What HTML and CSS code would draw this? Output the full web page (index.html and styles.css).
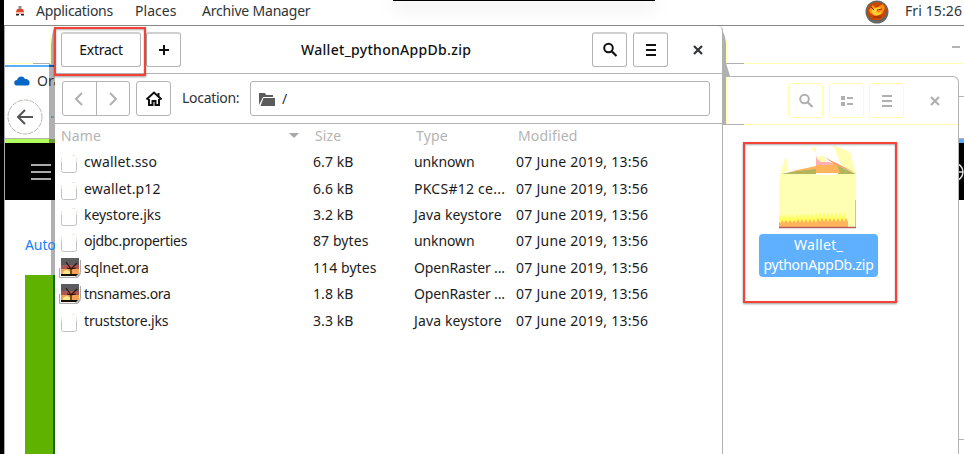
FILE: index.html
```
<!DOCTYPE html>
<html lang="en">
<head>
<meta charset="utf-8">
<title>Archive Manager</title>
<link rel="stylesheet" href="styles.css">
</head>
<body>
<svg class="defs" width="0" height="0">
  <symbol id="doc" viewBox="0 0 20 22"><path d="M2.500 8v9.500q0 2 2 2h11q2 0 2-2V8" fill="none" stroke="#c2c2c2"/><path d="M2.500 9V5M17.500 9V5M13 2.500h3" stroke="#dfeedd" fill="none"/></symbol>
  <symbol id="pic" viewBox="0 0 22 22"><path d="M.5 11v9.500h18q3-2 3-5V3" fill="#f4f4f4" stroke="#aaa"/><path d="M2 1h18v18H2z" fill="#5c5c5e"/><path d="M2 8h18v4H2z" fill="#ad5555"/><path d="M2 12h18v5H2z" fill="#f2a253"/><path d="M4 15q4-4 7 0v2H4z" fill="#ffe68b"/><path d="M2 17h18v2H2z" fill="#151006"/><path d="M12 17v-5L7 5m5 7 6-6m-6 6-4-1m4 1 5-1" fill="none" stroke="#30170c" stroke-width="1.200"/><path d="m16 20 5-5v3l-3 2z" fill="#bbb"/></symbol>
  <symbol id="search" viewBox="0 0 16 16"><circle cx="6.500" cy="6" r="4.300" fill="none" stroke="currentColor" stroke-width="2"/><path d="m9.700 9.200 4.800 4.800" stroke="currentColor" stroke-width="2.200"/></symbol>
  <symbol id="menu" viewBox="0 0 16 16"><path d="M3 3h10M3 8h10M3 13h10" stroke="currentColor" stroke-width="2"/></symbol>
  <symbol id="close" viewBox="0 0 16 16"><path d="m4 4 8 8m0-8-8 8" stroke="currentColor" stroke-width="2.200"/></symbol>
</svg>

<div class="desktop">
  <header class="topbar">
    <svg class="hat" width="10" height="12" viewBox="0 0 10 12"><path d="M3.500 1h3v3h-3z" fill="#8b8d8d"/><path d="M2 4h6l1 3H1z" fill="#e8432b"/><path d="M1 7h8v2H1z" fill="#f2b9a8"/><path d="M1 9h3v1.500H1zM6 9h3v1.500H6z" fill="#222"/></svg>
    <span class="m-apps">Applications</span><span class="m-places">Places</span><span class="m-arch">Archive Manager</span>
    <svg class="badge" width="24" height="24" viewBox="0 0 24 24"><circle cx="12" cy="12" r="11.500" fill="#666"/><path d="M2 10 5 4l6-2 8 2 3 6-2 6-5 4H7l-4-4z" fill="#c94800"/><path d="m4 10 4-5 3 3 7-4 2 4-3 6-7 2-5-3z" fill="#ff8b10"/><path d="M6 11q4-5 11-3-6 2-6 4 4 2 6-2-1 7-8 5z" fill="#ffd238"/><path d="m6 7 3 3m3 0 5-1M8 17h8" stroke="#8f2b00"/></svg>
    <span class="clock">Fri 15:26</span>
  </header>
  <div class="overlay-edge"></div>

  <section class="browser">
    <div class="b-title"><i class="b-line"></i><i class="b-min"></i></div>
    <div class="b-tab"><svg width="16" height="10" viewBox="0 0 16 10"><path d="M2 9.500C-1 8 0 4 3 4 4 0 9-1 11 3c3-.5 5 2 4.500 4.500-.5 2-1.500 2-3 2z" fill="#0766c6"/></svg><span>Ora</span></div>
    <div class="b-nav"><svg width="36" height="36" viewBox="0 0 36 36"><circle cx="18" cy="18" r="17" fill="#fff" stroke="#b9b9b2" stroke-dasharray="5 1"/><path d="M26 18H11m7-7-7 7 7 7" fill="none" stroke="#555" stroke-width="2"/></svg></div>
    <div class="b-accent"><i></i></div>
    <div class="b-band"><svg class="b-menu" width="20" height="16" viewBox="0 0 20 16"><path d="M0 1h20M0 8h20M0 15h20" stroke="#aaa" stroke-width="2"/></svg><svg class="globe" width="20" height="20" viewBox="0 0 20 20"><path d="M10 1a9 9 0 1 1 0 18a9 9 0 1 1 0-18M1 10h18M10 1v18" fill="none" stroke="#ddd" stroke-width="1.500"/></svg></div>
    <div class="b-page"><span>Auto</span><div class="b-green"></div><i class="b-rule"></i></div>
  </section>

  <svg class="shade" width="6" height="428" viewBox="0 0 6 428"><path d="M6 0Q3 5 2 20v18H0v75h6z" fill="#b0b0b0"/><path d="M0 39h6v2H0z" fill="#0a5aaa"/><path d="M0 113h6v4H0z" fill="#6f9a38"/><path d="M0 117h6v57H0z"/><path d="M2 174h4v75H2z" fill="#b0b0b0"/><path d="M4 249h2v179H4z" fill="#176607"/><path d="M1.500 10v28" stroke="#ffffb4"/><path d="M2 91h3" stroke="#308090"/></svg>
  <svg class="shade-r" width="10" height="100" viewBox="0 0 10 100"><path d="M1 6q3 5 3 14v17l4 13H4v48H0V0z" fill="#b0b0b0"/><path d="M4.500 15v22M4.500 51v47" stroke="#ffffb4"/></svg>

  <section class="files">
    <div class="f-head">
      <button><svg><use href="#search"/></svg></button>
      <button><svg viewBox="0 0 16 16"><path d="M2 3h4v4H2zM2 9h4v4H2z" fill="currentColor"/><path d="M8 5h6M8 11h6" stroke="currentColor" stroke-width="2"/></svg></button>
      <button><svg><use href="#menu"/></svg></button>
      <svg class="f-close"><use href="#close"/></svg>
    </div>
    <div class="f-item">
      <svg class="package" width="80" height="84" viewBox="0 0 80 84">
        <path d="M2 28 8 10l1 10 2 5-8 4zM33 3l5-1v6zM38 13l7-3 5 10H38zM55 0l17 7 6 22-15-9z" fill="#ffffb4"/>
        <path d="M3 29 38 22v7z" fill="#b4b45c"/><path d="M59 20 78 29H60z" fill="#b4b45c"/><path d="m10 27 28-6v-3h20l4 10H38V24z" fill="#ffb45c"/><path d="M38 10v10h18l-4-3h-9l-4-3z" fill="#ffb0b0"/><path d="m46 12 32 16-20-8z" fill="#ff955c"/>
        <path d="M2 29h76v53H1V43z" fill="#ffffb4"/><path d="M39 29h19v1H39z" fill="#fff"/>
        <path d="M1 82V72l1-3 1 5 1-5 1 5 1-5 2 5 1-5 1 5 2-5 2 5 1-5 2 5 2-6 2 6 1-6 2 6 2-6 2 6 2-6 2 6 2-6 2 6 2-7 2 7 2-7 2 7 2-7 2 7 2-7 2 7 2-7 2 7 2-7 2 7 2-7 2 7 2-7 2 7V82z" fill="#ffff5a"/>
        <path d="M1 82v-5l2 1 1-3 2 3 2-3 2 3 2-3 2 3 2-3 2 3 2-4 2 4 2-4 2 4 2-4 2 4 2-4 2 4 2-4 2 4 2-5 2 4 2-4 2 4 2-4 2 4 2-4 2 4 2-4 2 4 2-4 2 4 2-4 2 4 2-4 2 4V82z" fill="#ffb45c"/>
        <path d="M77.500 55v27" stroke="#ffae7c"/><path d="M1 82.500h77" stroke="#b45c5c" stroke-width="1.500"/>
      </svg>
      <div class="f-label"><span>Wallet_</span><span class="second">pythonAppDb.zip</span></div>
    </div>
  </section>
  <div class="callout item-callout"></div>

  <main class="archive">
    <div class="a-head">
      <button class="extract">Extract</button>
      <button class="plus"><svg viewBox="0 0 16 16"><path d="M8 3v10M3 8h10" stroke="currentColor" stroke-width="2"/></svg></button>
      <strong>Wallet_pythonAppDb.zip</strong>
      <button class="find"><svg><use href="#search"/></svg></button>
      <button class="burger"><svg><use href="#menu"/></svg></button>
      <svg class="a-close"><use href="#close"/></svg>
    </div>
    <div class="a-tools">
      <div class="pair"><span><svg viewBox="0 0 16 16"><path d="m11 2-6 6 6 6" fill="none" stroke="currentColor" stroke-width="2"/></svg></span><span><svg viewBox="0 0 16 16"><path d="m5 2 6 6-6 6" fill="none" stroke="currentColor" stroke-width="2"/></svg></span></div>
      <button class="home"><svg viewBox="0 0 16 16"><path d="m.5 8.500 7.500-7 7.500 7" fill="none" stroke="currentColor" stroke-width="2"/><path d="M3 8v6h3.500v-4h3v4H13V8M12.500 2v4" fill="none" stroke="currentColor" stroke-width="2"/></svg></button>
      <label>Location:</label>
      <div class="entry"><svg width="17" height="14" viewBox="0 0 17 14"><path d="M0 13V1h6l1 2h7v2H4z" fill="#5b5b5b"/><path d="M4.500 6H16v8H1.500z" fill="#5b5b5b"/></svg><span>/</span></div>
    </div>
    <div class="grid cols"><span>Name</span><i class="sort"></i><span>Size</span><span>Type</span><span>Modified</span></div>
    <div class="rows">
      <div class="grid"><svg class="doc"><use href="#doc"/></svg><span class="wide">cwallet.sso</span><span class="size">6.7 kB</span><span class="type">unknown</span><span class="date">07 June 2019, 13:56</span></div>
      <div class="grid"><svg class="doc"><use href="#doc"/></svg><span class="wide">ewallet.p12</span><span class="size">6.6 kB</span><span class="pk">PKCS#12 ce...</span><span class="date">07 June 2019, 13:56</span></div>
      <div class="grid"><svg class="doc"><use href="#doc"/></svg><span class="keys">keystore.jks</span><span class="size">3.2 kB</span><span class="java">Java keystore</span><span class="date">07 June 2019, 13:56</span></div>
      <div class="grid"><svg class="doc"><use href="#doc"/></svg><span>ojdbc.properties</span><span class="size">87 bytes</span><span class="type">unknown</span><span class="date">07 June 2019, 13:56</span></div>
      <div class="grid"><svg class="pic"><use href="#pic"/></svg><span class="tight">sqlnet.ora</span><span class="size">114 bytes</span><span class="open">OpenRaster ...</span><span class="date">07 June 2019, 13:56</span></div>
      <div class="grid"><svg class="pic"><use href="#pic"/></svg><span>tnsnames.ora</span><span class="size">1.8 kB</span><span class="open">OpenRaster ...</span><span class="date">07 June 2019, 13:56</span></div>
      <div class="grid"><svg class="doc"><use href="#doc"/></svg><span class="tight">truststore.jks</span><span class="size">3.3 kB</span><span class="java">Java keystore</span><span class="date">07 June 2019, 13:56</span></div>
    </div>
  </main>
  <div class="callout extract-callout"></div>
</div>
</body>
</html>
```
FILE: styles.css
```
* { box-sizing: border-box; }
body { margin: 0; font: 14px/20px "Noto Sans", sans-serif; letter-spacing: -.3px; color: #303436; }
.defs { position: absolute; }
svg { display: block; flex: none; }
button { padding: 0; font: inherit; letter-spacing: inherit; color: #111; background: #fff; border: 1px solid #b4b4b4; border-radius: 3px; display: flex; align-items: center; justify-content: center; width: 35px; height: 35px; flex: none; }
button svg, .pair svg { width: 16px; height: 16px; }
.desktop { position: relative; width: 964px; height: 454px; overflow: hidden; background: #fff; border-left: 4px solid #000; }
.topbar { height: 26px; padding: 1px 0 4px 11px; border-bottom: 1px solid #888; display: flex; align-items: center; white-space: nowrap; }
.hat { margin-right: 11px; }
.m-apps { width: 99px; }
.m-places { width: 67px; letter-spacing: .05px; }
.m-arch { letter-spacing: -.2px; }
.badge { margin: 1px 16px 0 auto; }
.clock { width: 59px; letter-spacing: .1px; }
.overlay-edge { position: absolute; left: 389px; top: 0; width: 262px; height: 1px; background: #000; box-shadow: 0 4px 18px 2px #0002; }

.browser { position: absolute; left: 0; top: 26px; width: 960px; height: 428px; border-left: 1px solid #aaa; }
.b-title { height: 41px; display: flex; flex-direction: column; justify-content: flex-end; position: relative; border-bottom: 2px solid #5aaeff; }
.b-line { height: 1px; margin-bottom: 1px; background: linear-gradient(90deg, #ffffb4 28px, #b0b0b0 28px 739px, #ffffb4 739px); }
.b-title::after { content: ""; position: absolute; left: 717px; right: 0; top: 39px; height: 2px; background: #fff; }
.b-min { position: absolute; right: 4px; top: 20px; width: 8px; height: 2px; background: #b4b4b4; }
.b-tab { height: 30px; padding: 0 0 2px 9px; display: flex; align-items: center; gap: 7px; border-bottom: 1px solid transparent; border-image: linear-gradient(90deg, #fff 800px, #b4b4b4 800px) 1; }
.b-tab span { position: relative; z-index: 1; letter-spacing: 0; }
.b-nav { height: 42px; padding: 2px 0 0 2px; border-bottom: 1px solid #b4b4b4; }
.b-accent { height: 4px; background: #b0ff5a; display: flex; }
.b-accent i { margin-left: auto; width: 60px; background: #5aaeff; }
.b-band { height: 57px; background: #000; display: flex; align-items: center; justify-content: space-between; padding-left: 26px; overflow: hidden; }
.b-menu { position: relative; z-index: 1; }
.b-page { padding: 35px 0 0 20px; }
.b-page span { position: relative; z-index: 1; color: #1681f5; letter-spacing: -.1px; }
.b-green { margin-top: 20px; width: 60px; height: 164px; background: #5fb200; }
.b-rule { display: block; height: 16px; border-top: 1px solid #b4b4b4; background: linear-gradient(90deg, #5fb200 60px, #fff 60px); border-image: linear-gradient(90deg, #5fb200 60px, #b4b4b4 60px) 1; }
.shade { position: absolute; left: 45px; top: 26px; }
.shade-r { position: absolute; z-index: 3; left: 718px; top: 26px; }

.files { position: absolute; left: 718px; top: 76px; width: 237px; height: 378px; background: #fff; border: 1px solid #b4b4b4; border-bottom: 0; border-radius: 0 6px 0 0; }
.f-head { height: 48px; padding: 6px 15px 6px 65px; display: flex; align-items: flex-start; position: relative; color: #b0b0b0; }
.f-head::after { content: ""; position: absolute; left: 0; right: 0; bottom: 0; height: 1px; background: linear-gradient(90deg, #b0b0b0 21px, #ffffb4 21px); }
.f-head button { height: 35px; border-color: #ffffb4; margin-right: 6px; color: #b0b0b0; }
.f-head button:nth-child(3) { margin-left: -1px; }
.f-close { width: 16px; height: 16px; margin: 10px 0 0 auto; }
.f-item { width: 119px; margin: 20px 0 0 36px; display: flex; flex-direction: column; align-items: center; }
.package { margin-left: -1px; }
.f-label { width: 119px; height: 43px; margin-top: 5px; padding-top: 1px; border-radius: 4px; background: #5fb0ff; color: #fff; display: flex; flex-direction: column; align-items: center; letter-spacing: .3px; }
.second { letter-spacing: -.25px; }
.callout { position: absolute; z-index: 4; border: 2px solid #f44336; box-shadow: 0 1px 2px #0006, inset 0 1px 2px #0005; }
.item-callout { left: 739px; top: 142px; width: 154px; height: 161px; }
.extract-callout { left: 50px; top: 27px; width: 92px; height: 49px; }

.archive { position: absolute; z-index: 2; left: 51px; top: 26px; width: 668px; height: 428px; background: #fff; border-right: 1px solid #b0b0b0; border-radius: 0 5px 0 0; }
.a-head { height: 48px; padding: 6px 16px 0 6px; border-bottom: 1px solid #b4b4b4; display: flex; }
.extract { width: 80px; margin-right: 5px; border-top: 2px solid #d0d0d0; }
.plus, .find, .burger { border-top: 2px solid #d0d0d0; }
.a-head button svg { margin-top: -1px; }
.a-head strong { flex: 1; padding: 8px 0 0 120px; font-weight: 500; font-size: 14px; letter-spacing: .3px; color: #111; }
.burger { margin-left: 6px; }
.a-close { width: 16px; height: 16px; margin: 10px 0 0 22px; }
.a-tools { height: 50px; padding: 7px 12px 0 7px; border-bottom: 1px solid #b4b4b4; display: flex; }
.pair { width: 68px; height: 35px; display: flex; border: 1px solid #b4b4b4; border-radius: 3px; color: #b0b0b0; }
.pair span { flex: 1; display: flex; align-items: center; justify-content: center; }
.pair span + span { border-left: 1px solid #b4b4b4; }
.home { margin: 0 11px 0 6px; }
.a-tools label { width: 68px; padding-top: 7px; }
.entry { flex: 1; height: 35px; padding-left: 8px; display: flex; align-items: center; gap: 6px; border: 1px solid #b4b4b4; border-radius: 3px; }
.grid { display: grid; grid-template-columns: 24px 229px 101px 102px 1fr; height: 26.4px; align-items: center; padding-left: 5px; white-space: nowrap; }
.cols { height: 25px; padding-bottom: 2px; grid-template-columns: 228px 26px 101px 102px 1fr; padding-left: 6px; color: #b4b4b4; letter-spacing: .15px; }
.sort { width: 0; border: 5px solid transparent; border-top-color: #a8a8a8; border-bottom: 0; }
.doc { width: 20px; height: 22px; margin: 4px 0 0 -1px; }
.pic { width: 22px; height: 22px; margin-left: -1px; }
.rows { color: #1c1c1c; }
.wide { letter-spacing: .15px; }
.keys { letter-spacing: -.05px; }
.tight { letter-spacing: -.15px; }
.size { letter-spacing: .08px; }
.type { letter-spacing: -.1px; }
.java { letter-spacing: .12px; }
.pk { letter-spacing: .25px; }
.open { letter-spacing: -.15px; }
.date { letter-spacing: .25px; }
```
